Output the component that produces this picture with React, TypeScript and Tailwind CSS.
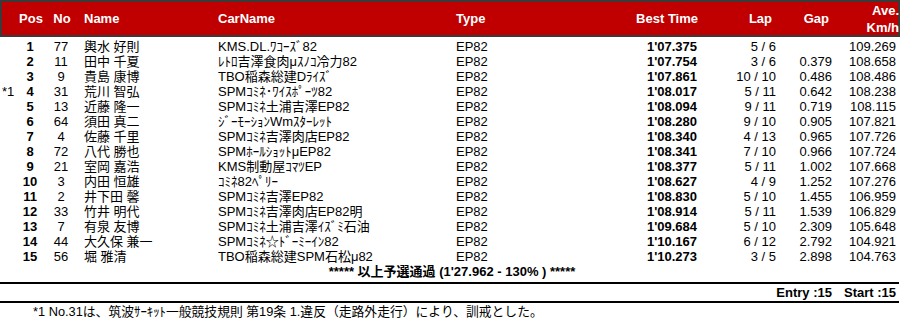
import React from "react";

type Row = {
  mark?: string;
  pos: string;
  no: string;
  name: string;
  car: string;
  best: string;
  lap: string;
  gap: string;
  ave: string;
};

const rows: Row[] = [
  { pos: "1", no: "77", name: "輿水 好則", car: "KMS.DL.ﾜｺｰｽﾞ82", best: "1'07.375", lap: "5 / 6", gap: "", ave: "109.269" },
  { pos: "2", no: "11", name: "田中 千夏", car: "ﾚﾄﾛ吉澤食肉μｽﾉｺ冷力82", best: "1'07.754", lap: "3 / 6", gap: "0.379", ave: "108.658" },
  { pos: "3", no: "9", name: "貴島 康博", car: "TBO稲森総建Dﾗｲｽﾞ", best: "1'07.861", lap: "10 / 10", gap: "0.486", ave: "108.486" },
  { mark: "*1", pos: "4", no: "31", name: "荒川 智弘", car: "SPMｺﾐﾈ･ﾜｲｽﾎﾟｰﾂ82", best: "1'08.017", lap: "5 / 11", gap: "0.642", ave: "108.238" },
  { pos: "5", no: "13", name: "近藤 隆一", car: "SPMｺﾐﾈ土浦吉澤EP82", best: "1'08.094", lap: "9 / 11", gap: "0.719", ave: "108.115" },
  { pos: "6", no: "64", name: "須田 真二", car: "ｼﾞｰﾓｰｼｮﾝWmｽﾀｰﾚｯﾄ", best: "1'08.280", lap: "9 / 10", gap: "0.905", ave: "107.821" },
  { pos: "7", no: "4", name: "佐藤 千里", car: "SPMｺﾐﾈ吉澤肉店EP82", best: "1'08.340", lap: "4 / 13", gap: "0.965", ave: "107.726" },
  { pos: "8", no: "72", name: "八代 勝也", car: "SPMﾎｰﾙｼｮｯﾄμEP82", best: "1'08.341", lap: "7 / 10", gap: "0.966", ave: "107.724" },
  { pos: "9", no: "21", name: "室岡 嘉浩", car: "KMS制動屋ｺﾏﾂEP", best: "1'08.377", lap: "5 / 11", gap: "1.002", ave: "107.668" },
  { pos: "10", no: "3", name: "内田 恒雄", car: "ｺﾐﾈ82ﾍﾟﾘｰ", best: "1'08.627", lap: "4 / 9", gap: "1.252", ave: "107.276" },
  { pos: "11", no: "2", name: "井下田 馨", car: "SPMｺﾐﾈ吉澤EP82", best: "1'08.830", lap: "5 / 10", gap: "1.455", ave: "106.959" },
  { pos: "12", no: "33", name: "竹井 明代", car: "SPMｺﾐﾈ吉澤肉店EP82明", best: "1'08.914", lap: "5 / 11", gap: "1.539", ave: "106.829" },
  { pos: "13", no: "7", name: "有泉 友博", car: "SPMｺﾐﾈ土浦吉澤ｲｽﾞﾐ石油", best: "1'09.684", lap: "5 / 10", gap: "2.309", ave: "105.648" },
  { pos: "14", no: "44", name: "大久保 兼一", car: "SPMｺﾐﾈ☆ﾄﾞｰﾐｰｲﾝ82", best: "1'10.167", lap: "6 / 12", gap: "2.792", ave: "104.921" },
  { pos: "15", no: "56", name: "堀 雅清", car: "TBO稲森総建SPM石松μ82", best: "1'10.273", lap: "3 / 5", gap: "2.898", ave: "104.763" },
];

const cols = "grid grid-cols-[16px_28px_34px_140px_238px_144px_97px_79px_56px_64px]";

export default function App() {
  return (
    <div className="w-[900px] h-[324px] bg-white text-black text-[13px] font-['Liberation_Sans','Noto_Sans_CJK_JP',sans-serif] overflow-hidden">
      {/* header */}
      <div className={`${cols} h-[37px] bg-[#c00000] border-[2px] border-[#3a3a3a] text-white font-bold leading-[16px] items-center`}>
        <div />
        <div className="text-center -ml-[2px]">Pos</div>
        <div className="text-center -ml-[2px]">No</div>
        <div className="pl-[4px]">Name</div>
        <div className="-ml-[2px]">CarName</div>
        <div className="-ml-[2px]">Type</div>
        <div className="text-right pr-[1px]">Best Time</div>
        <div className="text-right pr-[6px]">Lap</div>
        <div className="text-right pr-[5px]">Gap</div>
        <div className="text-right pr-[1px] leading-[17px] -mr-[2px]">
          <div>Ave.</div>
          <div>Km/h</div>
        </div>
      </div>

      {/* rows */}
      <div className="mt-[2px]">
        {rows.map((r) => (
          <div key={r.pos} className={`${cols} h-[15px] leading-[15px] whitespace-nowrap`}>
            <div className="pl-[2px]">{r.mark ?? ""}</div>
            <div className="text-center font-bold">{r.pos}</div>
            <div className="text-center">{r.no}</div>
            <div className="pl-[6px]">{r.name}</div>
            <div>{r.car}</div>
            <div>EP82</div>
            <div className="text-right font-bold">{r.best}</div>
            <div className="text-right">{r.lap}</div>
            <div className="text-right">{r.gap}</div>
            <div className="text-right">{r.ave}</div>
          </div>
        ))}
        <div className="h-[15px] leading-[15px] text-center font-bold pl-[4px] whitespace-nowrap">
          ***** 以上予選通過 (1'27.962 - 130% ) *****
        </div>
      </div>

      <div className="mt-[3px] h-[2px] w-[899px] bg-black" />
      <div className="h-[17px] leading-[17px] flex justify-end gap-[12px] pr-[4px] font-bold">
        <span>Entry :15</span>
        <span>Start :15</span>
      </div>
      <div className="h-[2px] w-[899px] bg-black" />
      <div className="h-[16px] leading-[16px] pl-[33px] mt-[1px] whitespace-nowrap text-[12.8px]">
        *1 No.31は、筑波ｻｰｷｯﾄ一般競技規則 第19条 1.違反（走路外走行）により、訓戒とした。
      </div>
    </div>
  );
}
